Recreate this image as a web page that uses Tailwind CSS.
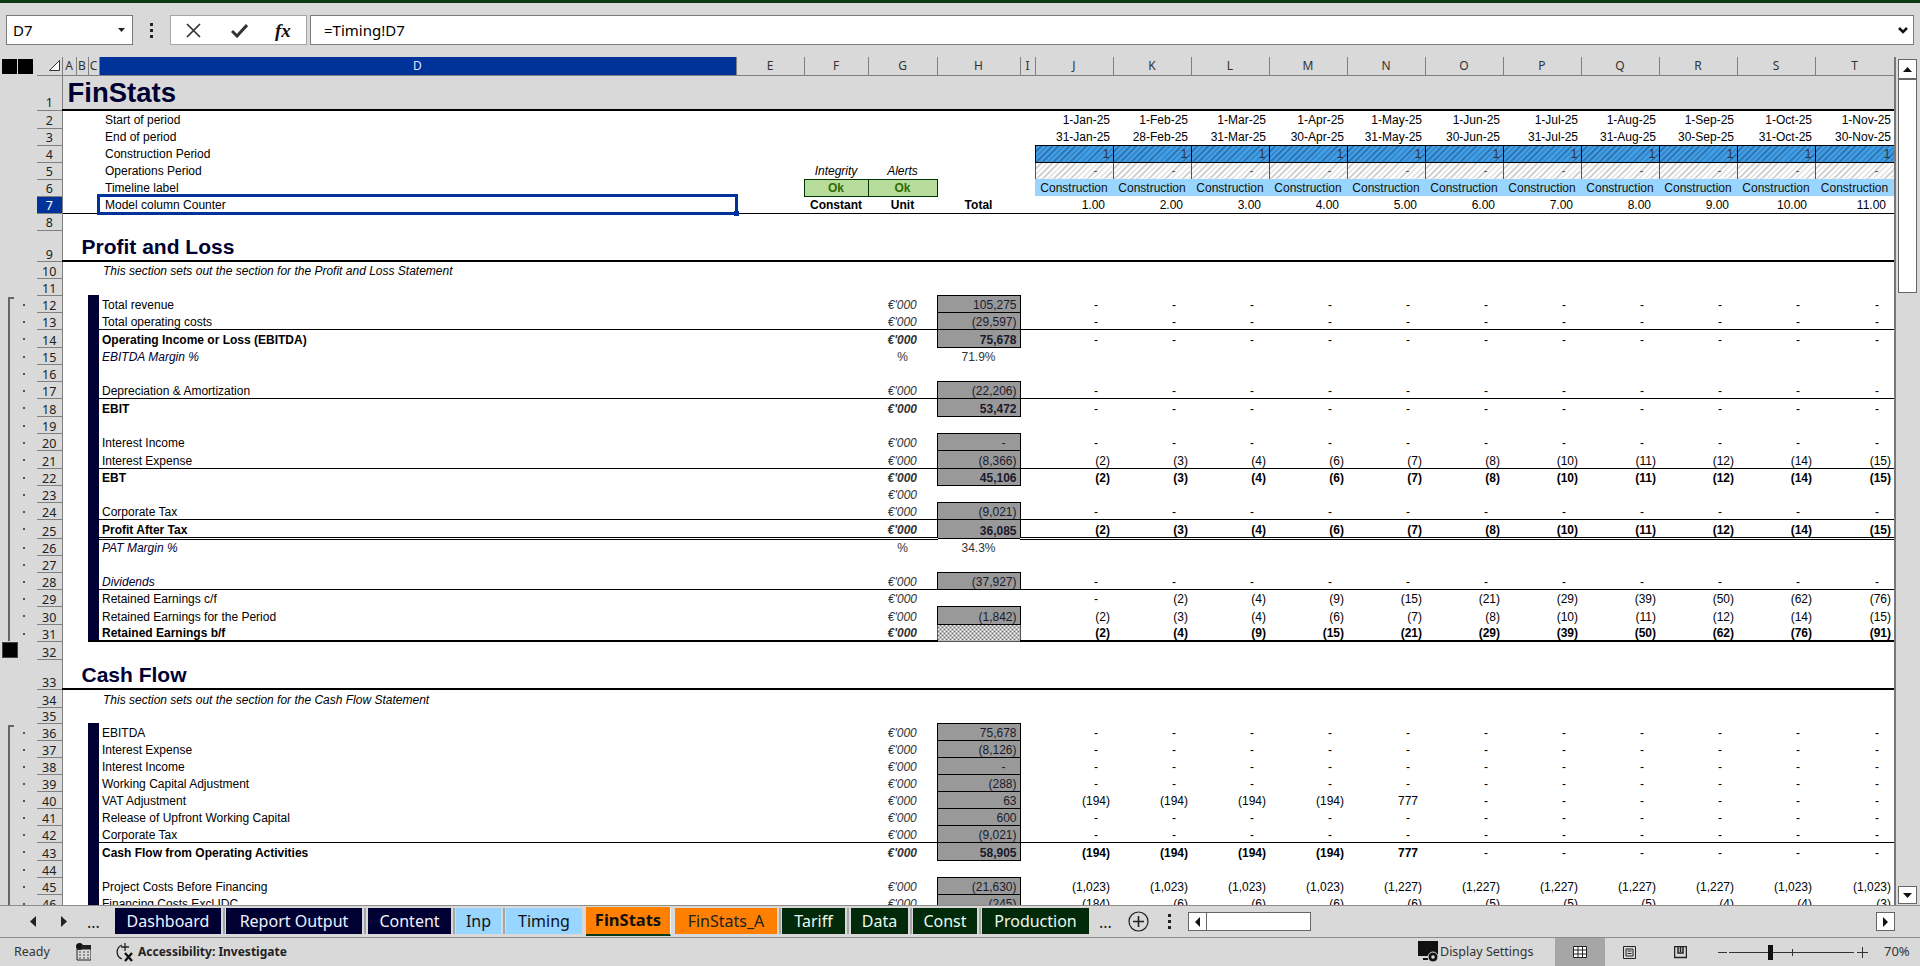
<!DOCTYPE html>
<html lang="en">
<head>
  <meta charset="UTF-8">
  <title>FinStats - Excel</title>
  <script src="https://cdn.jsdelivr.net/npm/@tailwindcss/browser@4"></script>
</head>
<body class="w-[1920px] h-[966px] overflow-hidden bg-[#d9d9d9] font-['Liberation_Sans',sans-serif] text-black">
  <div class="h-[3px] bg-[#0a3a14]"></div>

  <!-- formula bar -->
  <div class="h-[54px] flex items-start pt-[12px] pl-[6px] font-['Noto_Sans',sans-serif]">
    <div class="w-[127px] h-[30px] bg-white border border-[#7a7a7a] flex items-center justify-between pl-[6px] pr-[6px] text-[15px]">
      <span>D7</span>
      <svg width="8" height="4" viewBox="0 0 8 4"><path d="M0 0h7L3.500 4z" fill="#222"/></svg>
    </div>
    <div class="w-[37px] h-[30px] flex flex-col items-center justify-center gap-[3px]">
      <i class="w-[3px] h-[3px] bg-[#222]"></i><i class="w-[3px] h-[3px] bg-[#222]"></i><i class="w-[3px] h-[3px] bg-[#222]"></i>
    </div>
    <div class="w-[137px] h-[30px] bg-white border border-[#a6a6a6] flex items-center">
      <svg class="ml-[15px]" width="15" height="15" viewBox="0 0 15 15"><path d="M1 1l13 13M14 1L1 14" stroke="#333" stroke-width="1.700" fill="none"/></svg>
      <svg class="ml-[30px]" width="17" height="15" viewBox="0 0 17 15"><path d="M1 8l5 5L16 2" stroke="#333" stroke-width="3" fill="none"/></svg>
      <span class="ml-[27px] font-['Liberation_Serif',serif] font-bold italic text-[19px] leading-none text-[#111]">fx</span>
    </div>
    <div class="ml-[3px] w-[1604px] h-[30px] bg-white border border-[#7a7a7a] flex items-center justify-between pl-[13px] pr-[5px] text-[15px]">
      <span>=Timing!D7</span>
      <svg width="10" height="7" viewBox="0 0 10 7"><path d="M1 1l4 4 4-4" stroke="#111" stroke-width="2.500" fill="none"/></svg>
    </div>
  </div>

  <!-- sheet -->
  <div class="h-[848px] flex">
    <div class="w-[1896px] h-[848px] overflow-hidden border-r-2 border-[#777]">
      <table class="table-fixed w-[1894px] text-[12px] leading-[13px]">
        <colgroup>
          <col class="w-[37px]"><col class="w-[25px]"><col class="w-[14px]"><col class="w-[12px]"><col class="w-[11px]"><col class="w-[637px]"><col class="w-[68px]"><col class="w-[64px]"><col class="w-[69px]"><col class="w-[83px]"><col class="w-[15px]">
          <col class="w-[78px]"><col class="w-[78px]"><col class="w-[78px]"><col class="w-[78px]"><col class="w-[78px]"><col class="w-[78px]"><col class="w-[78px]"><col class="w-[78px]"><col class="w-[78px]"><col class="w-[78px]"><col class="w-[79px]">
        </colgroup>
        <tbody id="sheet"></tbody>
      </table>
    </div>
    <!-- vertical scrollbar -->
    <div class="w-[24px] h-[848px] pl-[2px] pt-[2px] flex flex-col">
      <div class="w-[19px] h-[20px] bg-white border border-[#666] flex items-center justify-center">
        <svg width="9" height="5" viewBox="0 0 9 5"><path d="M4.500 0L9 5H0z" fill="#111"/></svg>
      </div>
      <div class="w-[19px] h-[214px] bg-white border border-[#666]"></div>
      <div class="w-[19px] h-[18px] mt-[593px] bg-white border border-[#666] flex items-center justify-center">
        <svg width="9" height="5" viewBox="0 0 9 5"><path d="M0 0h9L4.500 5z" fill="#111"/></svg>
      </div>
    </div>
  </div>

  <!-- sheet tabs -->
  <div class="h-[33px] border-t border-b border-[#8c8c8c] flex items-start font-['Noto_Sans',sans-serif] text-[16px] leading-[26px]">
    <div class="w-[115px] h-[31px] flex items-center border-r-0">
      <svg class="ml-[30px]" width="6" height="11" viewBox="0 0 6 11"><path d="M6 0v11L0 5.500z" fill="#222"/></svg>
      <svg class="ml-[25px]" width="6" height="11" viewBox="0 0 6 11"><path d="M0 0v11l6-5.500z" fill="#222"/></svg>
      <span class="ml-[20px] text-[#222] leading-none">...</span>
    </div>
    <div class="flex mt-[2px]">
      <div class="w-[106px] h-[26px] bg-[#000033] text-[#eef3ff] text-center">Dashboard</div>
      <i class="w-[2px] h-[26px] mx-[1.500px] bg-[#a6a6a6]"></i>
      <div class="w-[136px] h-[26px] bg-[#000033] text-[#eef3ff] text-center">Report Output</div>
      <i class="w-[2px] h-[26px] mx-[2px] bg-[#a6a6a6]"></i>
      <div class="w-[83px] h-[26px] bg-[#000033] text-[#eef3ff] text-center">Content</div>
      <i class="w-[2px] h-[26px] mx-[1.500px] bg-[#a6a6a6]"></i>
      <div class="w-[45px] h-[26px] bg-[#99d6ff] text-[#111] text-center">Inp</div>
      <i class="w-[2px] h-[26px] mx-[1.500px] bg-[#a6a6a6]"></i>
      <div class="w-[76px] h-[26px] bg-[#99d6ff] text-[#111] text-center">Timing</div>
      <i class="w-[2px] h-[26px] mx-[1px] bg-transparent"></i>
      <div class="w-[85px] h-[29px] -mt-[1px] bg-[#ff8000] border-r border-[#f5f5f5] border-b-2 border-b-[#0a3a14] text-[#111] font-bold text-[16.500px] text-center">FinStats</div>
      <i class="w-[2px] h-[26px] mx-[1px] bg-transparent"></i>
      <div class="w-[102px] h-[26px] bg-[#ff8000] text-[#222] text-center">FinStats_A</div>
      <i class="w-[2px] h-[26px] mx-[1.500px] bg-[#a6a6a6]"></i>
      <div class="w-[63px] h-[26px] bg-[#002a0a] text-[#eef8ee] text-center">Tariff</div>
      <i class="w-[2px] h-[26px] mx-[2px] bg-[#a6a6a6]"></i>
      <div class="w-[57px] h-[26px] bg-[#002a0a] text-[#eef8ee] text-center">Data</div>
      <i class="w-[2px] h-[26px] mx-[1.500px] bg-[#a6a6a6]"></i>
      <div class="w-[64px] h-[26px] bg-[#002a0a] text-[#eef8ee] text-center">Const</div>
      <i class="w-[2px] h-[26px] mx-[1.500px] bg-[#a6a6a6]"></i>
      <div class="w-[107px] h-[26px] bg-[#002a0a] text-[#eef8ee] text-center">Production</div>
    </div>
    <div class="h-[31px] flex items-center">
      <span class="ml-[10px] text-[#222] leading-none">...</span>
      <svg class="ml-[16px]" width="21" height="21" viewBox="0 0 21 21"><circle cx="10.500" cy="10.500" r="9.500" fill="none" stroke="#222" stroke-width="1.200"/><path d="M10.500 5v11M5 10.500h11" stroke="#222" stroke-width="1.600"/></svg>
      <div class="ml-[19px] flex flex-col gap-[3px]"><i class="w-[3px] h-[3px] bg-[#222]"></i><i class="w-[3px] h-[3px] bg-[#222]"></i><i class="w-[3px] h-[3px] bg-[#222]"></i></div>
      <div class="ml-[17px] w-[123px] h-[19px] bg-white border border-[#666] flex">
        <div class="w-[18px] h-[17px] border-r border-[#666] flex items-center justify-center"><svg width="5" height="10" viewBox="0 0 5 10"><path d="M5 0v10L0 5z" fill="#111"/></svg></div>
      </div>
      <div class="ml-[565px] w-[19px] h-[19px] bg-white border border-[#666] flex items-center justify-center"><svg width="5" height="10" viewBox="0 0 5 10"><path d="M0 0v10l5-5z" fill="#111"/></svg></div>
    </div>
  </div>

  <!-- status bar -->
  <div class="h-[28px] flex items-center font-['Noto_Sans',sans-serif] text-[12.500px] text-[#333]">
    <span class="ml-[14px] w-[37px]">Ready</span>
    <svg class="ml-[25px]" width="15" height="18" viewBox="0 0 15 18"><circle cx="3.500" cy="3.500" r="3.500" fill="#111"/><path d="M5 3h10v3H1v11h14V6" fill="none" stroke="#222"/><path d="M5 2h10v4H5z" fill="#222"/><path d="M3 9h2M7 9h2M11 9h2M3 12h2M7 12h2M11 12h2M3 15h2M7 15h2M11 15h2" stroke="#444"/></svg>
    <svg class="ml-[24px]" width="21" height="20" viewBox="0 0 21 20"><path d="M7 3a7.500 7.500 0 0 0 0 14" fill="none" stroke="#222" stroke-width="1.300"/><path d="M10 1v8M6 5h8" stroke="#222" stroke-width="1.300"/><path d="M10 11l7 8M17 11l-7 8" stroke="#111" stroke-width="2.300"/></svg>
    <span class="ml-[2px] font-bold text-[12px] text-[#222] w-[152px] whitespace-nowrap">Accessibility: Investigate</span>
    <svg class="ml-[1128px]" width="22" height="22" viewBox="0 0 22 22"><path d="M0 0h20v15H0zM5 17h5v2H5z" fill="#111"/><circle cx="15" cy="16" r="5" fill="#111" stroke="#d9d9d9"/><circle cx="15" cy="16" r="1.800" fill="#d9d9d9"/></svg>
    <span class="w-[90px] whitespace-nowrap">Display Settings</span>
    <div class="ml-[25px] w-[50px] h-[28px] bg-[#a6a6a6] flex items-center justify-center">
      <svg width="14" height="12" viewBox="0 0 14 12"><path d="M.5.500h13v11H.5zM.5 4h13M.5 8h13M5 .500v11M9.500 .500v11" fill="#fff" stroke="#222"/></svg>
    </div>
    <svg class="ml-[18px]" width="13" height="13" viewBox="0 0 13 13"><path d="M.5.500h12v12H.5z" fill="none" stroke="#222"/><path d="M3 3h7v7H3zM4.500 5h4M4.500 7.500h4" fill="none" stroke="#222"/></svg>
    <svg class="ml-[38px]" width="13" height="13" viewBox="0 0 13 13"><path d="M.5.500h12v11H.5z" fill="none" stroke="#222" stroke-width="1.500"/><path d="M4 1v6h5V1M6.500 1v5" fill="none" stroke="#222" stroke-width="1.500"/></svg>
    <div class="ml-[31px] w-[9px] h-[1px] bg-[#333]"></div>
    <div class="ml-[2px] w-[125px] h-[1px] bg-[#333] relative">
      <i class="absolute left-[39px] -top-[7px] w-[5px] h-[15px] bg-[#111]"></i>
      <i class="absolute left-[63px] -top-[3px] w-[1px] h-[7px] bg-[#333]"></i>
    </div>
    <svg class="ml-[3px]" width="11" height="11" viewBox="0 0 11 11"><path d="M5.500 0v11M0 5.500h11" stroke="#333"/></svg>
    <span class="ml-[16px] text-[13px]">70%</span>
  </div>

  <script>
    var letters = ['A','B','C','D','E','F','G','H','I','J','K','L','M','N','O','P','Q','R','S','T'];
    var starts = ['1-Jan-25','1-Feb-25','1-Mar-25','1-Apr-25','1-May-25','1-Jun-25','1-Jul-25','1-Aug-25','1-Sep-25','1-Oct-25','1-Nov-25'];
    var ends = ['31-Jan-25','28-Feb-25','31-Mar-25','30-Apr-25','31-May-25','30-Jun-25','31-Jul-25','31-Aug-25','30-Sep-25','31-Oct-25','30-Nov-25'];
    var dashes = ['-','-','-','-','-','-','-','-','-','-','-'];
    var interest = ['(2)','(3)','(4)','(6)','(7)','(8)','(10)','(11)','(12)','(14)','(15)'];
    var reCf = ['-','(2)','(4)','(9)','(15)','(21)','(29)','(39)','(50)','(62)','(76)'];
    var reBf = ['(2)','(4)','(9)','(15)','(21)','(29)','(39)','(50)','(62)','(76)','(91)'];
    var vat = ['(194)','(194)','(194)','(194)','777','-','-','-','-','-','-'];
    var project = ['(1,023)','(1,023)','(1,023)','(1,023)','(1,227)','(1,227)','(1,227)','(1,227)','(1,227)','(1,023)','(1,023)'];
    var financing = ['(184)','(6)','(6)','(6)','(6)','(5)','(5)','(5)','(4)','(4)','(3)'];

    var THIN = 'border-b border-black';
    var DOUBLE = 'border-b-[3px] border-double border-black';
    var THICK = 'border-b-2 border-black';

    var heights = {1:35,2:18,9:31,10:17,12:17,14:18,18:18,21:18,25:19,30:18,32:18,33:30,34:18,35:16,43:18};

    function gutter(n) {
      var inner = '';
      if ((n >= 12 && n <= 31) || n >= 36) {
        inner += '<i class="absolute left-[23px] top-[9px] w-[2px] h-[2px] bg-[#555]"></i>';
        var start = n == 12 || n == 36;
        inner += '<i class="absolute left-[8px] ' + (start ? 'top-[2px]' : 'top-0') + ' bottom-0 w-[2px] bg-[#666]"></i>';
        if (start) inner += '<i class="absolute left-[8px] top-[2px] w-[6px] h-[2px] bg-[#666]"></i>';
      }
      if (n == 32) inner += '<i class="absolute left-[2px] top-[1px] w-[16px] h-[16px] bg-black border border-[#444]"></i>';
      return '<td class="relative bg-[#d9d9d9]">' + inner + '</td>';
    }

    function rowHead(n) {
      var cls = n == 7 ? 'bg-[#003399] text-white' : 'bg-[#d9d9d9] text-[#222]';
      return '<td class="' + cls + ' border-b border-r border-[#808080] text-center align-bottom font-[\'Noto_Sans\',sans-serif] text-[12.500px]">' + n + '</td>';
    }

    function tr(n, cells) {
      var h = heights[n] || 17;
      var cls = (n == 1 ? '' : 'bg-white') + (n <= 8 ? ' leading-[15px]' : '');
      return '<tr class="' + cls + '" style="height:' + h + 'px">' + gutter(n) + rowHead(n) + cells + '</tr>';
    }

    // right padding follows the number format: dash, bracket, plain
    function valPad(v) {
      if (v == '-') return 'pr-[15px]';
      if (v.charAt(0) == '(') return 'pr-[3px]';
      return 'pr-[7px]';
    }

    function timeline(fn) {
      var out = '';
      for (var i = 0; i < 11; i++) out += fn(i);
      return out;
    }

    function head(n, label, f, g, h, line, cols) {
      var l = line || '';
      return tr(n,
        '<td colspan="3" class="' + l + '"></td>' +
        '<td class="' + l + ' align-bottom pl-[6px] ' + (n == 7 ? 'relative outline-[3px] -outline-offset-1 outline-[#003399]' : '') + '">' + label +
          (n == 7 ? '<i class="absolute -right-[3px] -bottom-[3px] w-[5px] h-[5px] bg-[#003399]"></i>' : '') + '</td>' +
        '<td class="' + l + '"></td>' + f + g + h +
        '<td class="' + l + '"></td>' + cols);
    }

    function blank(n, line) {
      return tr(n, '<td colspan="20" class="' + (line || '') + '"></td>');
    }

    function dataRow(n, label, style, unit, hval, vals, line) {
      var l = line || '';
      var bold = style == 'b' ? 'font-bold' : '';
      var ital = style == 'i' ? 'italic' : '';
      var c = '<td colspan="2"></td><td class="bg-[#000033] ' + (line == THICK ? l : '') + '"></td>';
      c += '<td class="' + l + ' align-bottom pl-[3px] whitespace-nowrap ' + bold + ' ' + ital + ' ' + (style == 'i' ? 'text-[#000033]' : '') + '">' + label + '</td>';
      c += '<td class="' + l + '"></td><td class="' + l + '"></td>';
      var unitCls = unit == '%' ? 'text-[#333]' : 'italic text-[#333]';
      c += '<td class="' + l + ' align-bottom text-center ' + unitCls + ' ' + bold + '">' + (unit == '%' ? '%' : (unit ? "€'000" : '')) + '</td>';
      if (hval == 'pattern') {
        c += '<td class="border border-[#555] bg-[repeating-conic-gradient(#777_0_25%,#fff_0_50%)] bg-[length:4px_4px]"></td>';
      } else if (hval && hval.indexOf('%') > 0) {
        c += '<td class="' + l + ' align-bottom text-center text-[#333]">' + hval + '</td>';
      } else if (hval) {
        c += '<td class="border border-black bg-[#999999] align-bottom text-right text-[#1a1a2e] ' + (hval == '-' ? 'pr-[14px]' : 'pr-[3px]') + ' ' + bold + '">' + hval + '</td>';
      } else {
        c += '<td class="' + l + '"></td>';
      }
      c += '<td class="' + l + '"></td>';
      for (var i = 0; i < 11; i++) {
        var v = vals ? vals[i] : '';
        c += '<td class="' + l + ' align-bottom text-right ' + (v == '-' ? '' : bold) + ' ' + (vals ? valPad(v) : '') + '">' + v + '</td>';
      }
      return tr(n, c);
    }

    var html = '';

    // column headers
    html += '<tr class="h-[18px]"><td class="bg-[#d9d9d9]"><div class="flex gap-[1px] pl-[2px]"><i class="w-[15px] h-[15px] bg-black"></i><i class="w-[15px] h-[15px] bg-black"></i></div></td>';
    html += '<td class="border-b border-r border-[#808080] align-middle"><svg class="ml-[12px]" width="11" height="11" viewBox="0 0 11 11"><path d="M10.500 .500v10H.500z" fill="#fff" stroke="#333"/></svg></td>';
    letters.forEach(function (c) {
      var cls = c == 'D' ? 'bg-[#003399] text-[#dfe8ff]' : 'bg-[#d9d9d9] text-[#333]';
      html += '<td class="' + cls + ' border-b border-r border-[#808080] text-center align-middle font-[\'Noto_Sans\',sans-serif] text-[12px]">' + c + '</td>';
    });
    html += '</tr>';

    // title
    html += tr(1, '<td colspan="20" class="border-b-2 border-black align-bottom pl-[5px] pb-[1px] text-[27.500px] leading-[30px] font-bold text-[#000033]">FinStats</td>');

    // timeline header
    html += head(2, 'Start of period', '<td></td>', '<td></td>', '<td></td>', '', timeline(function (i) { return '<td class="align-bottom text-right pr-[3px]">' + starts[i] + '</td>'; }));
    html += head(3, 'End of period', '<td></td>', '<td></td>', '<td></td>', '', timeline(function (i) { return '<td class="align-bottom text-right pr-[3px]">' + ends[i] + '</td>'; }));
    html += head(4, 'Construction Period', '<td></td>', '<td></td>', '<td></td>', '', timeline(function () {
      return '<td class="border border-black bg-[repeating-linear-gradient(135deg,#2a6296_0,#2a6296_1px,#3f9fe8_1px,#3f9fe8_4px)] align-bottom text-right pr-[3px] text-[#333]">1</td>';
    }));
    html += head(5, 'Operations Period', '<td class="align-bottom text-center italic">Integrity</td>', '<td class="align-bottom text-center italic">Alerts</td>', '<td></td>', '', timeline(function () {
      return '<td class="border-x border-[#555] bg-[repeating-linear-gradient(135deg,#bdbdbd_0,#bdbdbd_1px,#ffffff_1px,#ffffff_4px)] align-bottom text-right pr-[15px] text-[#555]">-</td>';
    }));
    html += head(6, 'Timeline label',
      '<td class="border border-[#003300] bg-[#b8dc9b] align-bottom text-center font-bold text-[#2e6b00]">Ok</td>',
      '<td class="border border-[#003300] bg-[#b8dc9b] align-bottom text-center font-bold text-[#2e6b00]">Ok</td>',
      '<td></td>', '', timeline(function () { return '<td class="bg-[#99d6ff] align-bottom text-center text-[#111]">Construction</td>'; }));
    html += head(7, 'Model column Counter',
      '<td class="' + THIN + ' align-bottom text-center font-bold">Constant</td>',
      '<td class="' + THIN + ' align-bottom text-center font-bold">Unit</td>',
      '<td class="' + THIN + ' align-bottom text-center font-bold">Total</td>', THIN,
      timeline(function (i) { return '<td class="' + THIN + ' align-bottom text-right pr-[8px]">' + (i + 1) + '.00</td>'; }));
    html += blank(8);

    // Profit and Loss
    html += tr(9, '<td colspan="20" class="' + THICK + ' align-bottom pl-[19px] pb-[1px] text-[21px] leading-[24px] font-bold text-[#000033]">Profit and Loss</td>');
    html += tr(10, '<td colspan="3"></td><td colspan="17" class="align-bottom pl-[4px] italic">This section sets out the section for the Profit and Loss Statement</td>');
    html += blank(11);
    html += dataRow(12, 'Total revenue', '', 1, '105,275', dashes);
    html += dataRow(13, 'Total operating costs', '', 1, '(29,597)', dashes, THIN);
    html += dataRow(14, 'Operating Income or Loss (EBITDA)', 'b', 1, '75,678', dashes);
    html += dataRow(15, 'EBITDA Margin %', 'i', '%', '71.9%');
    html += dataRow(16, '', '', 0);
    html += dataRow(17, 'Depreciation &amp; Amortization', '', 1, '(22,206)', dashes, THIN);
    html += dataRow(18, 'EBIT', 'b', 1, '53,472', dashes);
    html += dataRow(19, '', '', 0);
    html += dataRow(20, 'Interest Income', '', 1, '-', dashes);
    html += dataRow(21, 'Interest Expense', '', 1, '(8,366)', interest, THIN);
    html += dataRow(22, 'EBT', 'b', 1, '45,106', interest);
    html += dataRow(23, '', '', 1);
    html += dataRow(24, 'Corporate Tax', '', 1, '(9,021)', dashes, THIN);
    html += dataRow(25, 'Profit After Tax', 'b', 1, '36,085', interest, DOUBLE);
    html += dataRow(26, 'PAT Margin %', 'i', '%', '34.3%');
    html += dataRow(27, '', '', 0);
    html += dataRow(28, 'Dividends', 'i', 1, '(37,927)', dashes, THIN);
    html += dataRow(29, 'Retained Earnings c/f', '', 1, '', reCf);
    html += dataRow(30, 'Retained Earnings for the Period', '', 1, '(1,842)', interest);
    html += dataRow(31, 'Retained Earnings b/f', 'b', 1, 'pattern', reBf, THICK);
    html += blank(32);

    // Cash Flow
    html += tr(33, '<td colspan="20" class="' + THICK + ' align-bottom pl-[19px] pb-[1px] text-[21px] leading-[24px] font-bold text-[#000033]">Cash Flow</td>');
    html += tr(34, '<td colspan="3"></td><td colspan="17" class="align-bottom pl-[4px] italic">This section sets out the section for the Cash Flow Statement</td>');
    html += blank(35);
    html += dataRow(36, 'EBITDA', '', 1, '75,678', dashes);
    html += dataRow(37, 'Interest Expense', '', 1, '(8,126)', dashes);
    html += dataRow(38, 'Interest Income', '', 1, '-', dashes);
    html += dataRow(39, 'Working Capital Adjustment', '', 1, '(288)', dashes);
    html += dataRow(40, 'VAT Adjustment', '', 1, '63', vat);
    html += dataRow(41, 'Release of Upfront Working Capital', '', 1, '600', dashes);
    html += dataRow(42, 'Corporate Tax', '', 1, '(9,021)', dashes, THIN);
    html += dataRow(43, 'Cash Flow from Operating Activities', 'b', 1, '58,905', vat);
    html += dataRow(44, '', '', 0);
    html += dataRow(45, 'Project Costs Before Financing', '', 1, '(21,630)', project);
    html += dataRow(46, 'Financing Costs Excl IDC', '', 1, '(245)', financing);

    document.getElementById('sheet').innerHTML = html;
  </script>
</body>
</html>
